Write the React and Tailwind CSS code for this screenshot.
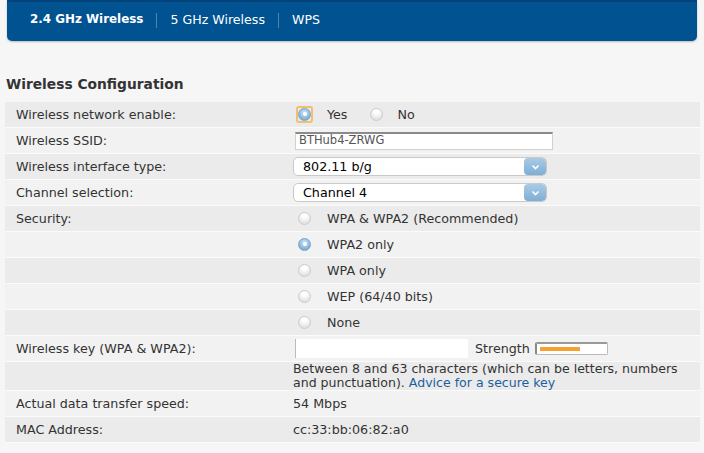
import React from "react";

const font = { fontFamily: '"DejaVu Sans", Verdana, sans-serif' };

function Radio({ checked, focus }) {
  const dot = checked ? (
    <span className="flex h-[13px] w-[13px] items-center justify-center rounded-full border border-[#7aa5ca] bg-[radial-gradient(circle_at_50%_35%,#d3e7f7,#5f98c8)]">
      <span className="h-[4px] w-[4px] rounded-full bg-white" />
    </span>
  ) : (
    <span className="block h-[13px] w-[13px] rounded-full border border-[#cbcbcb] bg-[radial-gradient(circle_at_50%_25%,#ffffff_20%,#d6d6d6)]" />
  );
  if (focus)
    return (
      <span className="flex h-[17px] w-[17px] items-center justify-center rounded-[3px] border-2 border-[#f0c070]">
        {dot}
      </span>
    );
  return <span className="flex h-[17px] w-[17px] items-center justify-center">{dot}</span>;
}

function Row({ label, children, dark, h = "h-[26px]" }) {
  return (
    <div
      className={`flex ${h} items-center border-b border-[#fbfbfb] ${
        dark ? "bg-[#ebebeb]" : "bg-[#f2f2f2]"
      }`}
    >
      <div className="w-[288px] shrink-0 pl-[11px] text-[#333]">{label}</div>
      <div className="flex flex-1 items-center text-[#333]">{children}</div>
    </div>
  );
}

function Select({ value }) {
  return (
    <div className="flex h-[19px] w-[254px] items-stretch overflow-hidden rounded-[5px] border border-[#c9c9c9] bg-white">
      <div className="flex flex-1 items-center pl-[9px] text-[12.7px] text-black">{value}</div>
      <div className="flex w-[22px] items-center justify-center rounded-[4px] bg-[linear-gradient(#a9cbe6,#7eaed6)]">
        <svg width="9" height="6" viewBox="0 0 9 6">
          <path d="M1.5 1.5 L4.5 4.5 L7.5 1.5" stroke="white" strokeWidth="1.6" fill="none" />
        </svg>
      </div>
    </div>
  );
}

export default function App() {
  return (
    <div className="h-[453px] w-[704px] overflow-hidden bg-[#f6f6f6] text-[12.7px]" style={font}>
      <div className="mx-[7px] flex h-[41px] items-center rounded-b-[5px] border-t-2 border-[#014379] bg-[#005291] pl-[23px] pb-[3px] text-white shadow-[0_1px_2px_rgba(0,0,0,0.25)]">
        <span className="text-[11.9px] font-bold">2.4 GHz Wireless</span>
        <span className="mx-[13px] h-[15px] w-px bg-[#4d86b5]" />
        <span className="text-[12.6px]">5 GHz Wireless</span>
        <span className="mx-[13px] h-[15px] w-px bg-[#4d86b5]" />
        <span className="text-[12.6px]">WPS</span>
      </div>

      <div className="mt-[33px] pl-[6px] text-[13.8px] font-bold leading-[20px] text-[#333]">Wireless Configuration</div>

      <div className="ml-[5px] mr-[4px] mt-[8px]">
        <Row label="Wireless network enable:" dark>
          <span className="ml-[3px]"><Radio checked focus /></span>
          <span className="ml-[14px]">Yes</span>
          <span className="ml-[21px]"><Radio /></span>
          <span className="ml-[12px]">No</span>
        </Row>
        <Row label="Wireless SSID:">
          <div className="ml-[2px] flex h-[18px] w-[258px] items-center border border-[#d0d0d0] border-t-2 border-t-[#8a8a8a] bg-white pl-[3px] text-[11.5px] text-[#555]">
            BTHub4-ZRWG
          </div>
        </Row>
        <Row label="Wireless interface type:" dark>
          <Select value="802.11 b/g" />
        </Row>
        <Row label="Channel selection:">
          <Select value="Channel 4" />
        </Row>
        <Row label="Security:" dark>
          <span className="ml-[3px]"><Radio /></span>
          <span className="ml-[14px]">WPA &amp; WPA2 (Recommended)</span>
        </Row>
        <Row label="">
          <span className="ml-[3px]"><Radio checked /></span>
          <span className="ml-[14px]">WPA2 only</span>
        </Row>
        <Row label="" dark>
          <span className="ml-[3px]"><Radio /></span>
          <span className="ml-[14px]">WPA only</span>
        </Row>
        <Row label="">
          <span className="ml-[3px]"><Radio /></span>
          <span className="ml-[14px]">WEP (64/40 bits)</span>
        </Row>
        <Row label="" dark>
          <span className="ml-[3px]"><Radio /></span>
          <span className="ml-[14px]">None</span>
        </Row>
        <Row label="Wireless key (WPA & WPA2):">
          <div className="ml-[2px] h-[19px] w-[173px] border-l border-[#bbb] bg-white" />
          <span className="ml-[7px]">Strength</span>
          <div className="ml-[5px] flex h-[13px] w-[73px] items-center rounded-[2px] border border-[#bbb] border-l-2 border-l-[#888] border-t-2 border-t-[#999] bg-white pl-[3px]">
            <div className="h-[4px] w-[40px] bg-[#f5a030]" />
          </div>
        </Row>
        <Row label="" dark h="h-[29px]">
          <div className="text-[12.55px] leading-[14px]">
            Between 8 and 63 characters (which can be letters, numbers
            <br />
            and punctuation). <span className="text-[#1b5ea0]">Advice for a secure key</span>
          </div>
        </Row>
        <Row label="Actual data transfer speed:">54 Mbps</Row>
        <Row label="MAC Address:" dark>cc:33:bb:06:82:a0</Row>
      </div>
    </div>
  );
}
